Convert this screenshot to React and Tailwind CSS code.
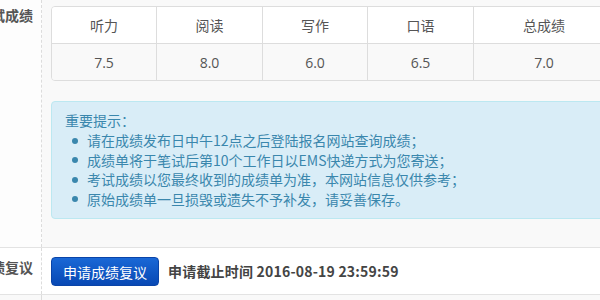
import React from "react";

const font = { fontFamily: '"Noto Sans CJK SC", "Noto Sans", sans-serif' };

const heads = ["听力", "阅读", "写作", "口语", "总成绩"];
const vals = ["7.5", "8.0", "6.0", "6.5", "7.0"];
const widths = ["w-[105px]", "w-[106px]", "w-[105px]", "w-[106px]", "w-[140px]"];

const tips = [
  "请在成绩发布日中午12点之后登陆报名网站查询成绩；",
  "成绩单将于笔试后第10个工作日以EMS快递方式为您寄送；",
  "考试成绩以您最终收到的成绩单为准，本网站信息仅供参考；",
  "原始成绩单一旦损毁或遗失不予补发，请妥善保存。",
];

export default function App() {
  return (
    <div
      className="w-[600px] h-[300px] overflow-hidden bg-[#f9f9f9] flex flex-col text-[14px]"
      style={font}
    >
      {/* Row 1 */}
      <div className="flex h-[248px] shrink-0 border-b border-[#e3e3e3]">
        <div className="w-[42px] shrink-0 bg-[#fdfdfd] border-r border-dashed border-[#dcdcdc] flex justify-end pr-[8px] pt-[4px] overflow-hidden">
          <span className="whitespace-nowrap font-bold text-[#555] leading-[22px]">考试成绩</span>
        </div>
        <div className="flex-1 min-w-0 overflow-hidden pl-[9px] pt-[6px]">
          <div className="w-[700px] border border-[#dddddd] rounded-[4px] overflow-hidden text-[#555]">
            <div className="flex bg-white h-[37px] border-b border-[#dddddd]">
              {heads.map((h, i) => (
                <div
                  key={h}
                  className={`${widths[i]} shrink-0 flex items-center justify-center ${i < 4 ? "border-r border-[#dddddd]" : ""}`}
                >
                  {h}
                </div>
              ))}
            </div>
            <div className="flex bg-[#f9f9f9] h-[36px]">
              {vals.map((v, i) => (
                <div
                  key={i}
                  className={`${widths[i]} shrink-0 flex items-center justify-center ${i < 4 ? "border-r border-[#dddddd]" : ""}`}
                  style={{ fontFamily: '"Open Sans", "Noto Sans", sans-serif' }}
                >
                  {v}
                </div>
              ))}
            </div>
          </div>
          <div className="mt-[20px] w-[620px] h-[118px] bg-[#d9edf7] border border-[#bce8f1] rounded-[4px] pl-[13px] pt-[8px] text-[#3a87ad]">
            <div className="leading-[21px]">重要提示：</div>
            <ul>
              {tips.map((t) => (
                <li key={t} className="flex items-center leading-[19.5px]">
                  <span className="ml-[7px] mr-[9px] w-[6px] h-[6px] rounded-full bg-[#3a87ad] shrink-0"></span>
                  <span className="whitespace-nowrap">{t}</span>
                </li>
              ))}
            </ul>
          </div>
        </div>
      </div>
      {/* Row 2 */}
      <div className="flex h-[47px] shrink-0 bg-white border-b border-[#e3e3e3]">
        <div className="w-[42px] shrink-0 border-r border-dashed border-[#dcdcdc] flex justify-end items-center pr-[8px] pb-[8px] overflow-hidden">
          <span className="whitespace-nowrap font-bold text-[#555]">成绩复议</span>
        </div>
        <div className="flex-1 flex items-center pl-[9px] pt-[1px]">
          <button className="w-[108px] h-[29px] rounded-[4px] border border-[#0a44a8] bg-gradient-to-b from-[#1a68d6] to-[#0848b4] text-white text-[14px] leading-none">
            申请成绩复议
          </button>
          <span className="ml-[9px] font-bold text-[#444] whitespace-nowrap tracking-[0.2px]">
            申请截止时间 2016-08-19 23:59:59
          </span>
        </div>
      </div>
      {/* Row 3 */}
      <div className="flex flex-1">
        <div className="w-[42px] shrink-0 border-r border-dashed border-[#dcdcdc]"></div>
        <div className="flex-1"></div>
      </div>
    </div>
  );
}
